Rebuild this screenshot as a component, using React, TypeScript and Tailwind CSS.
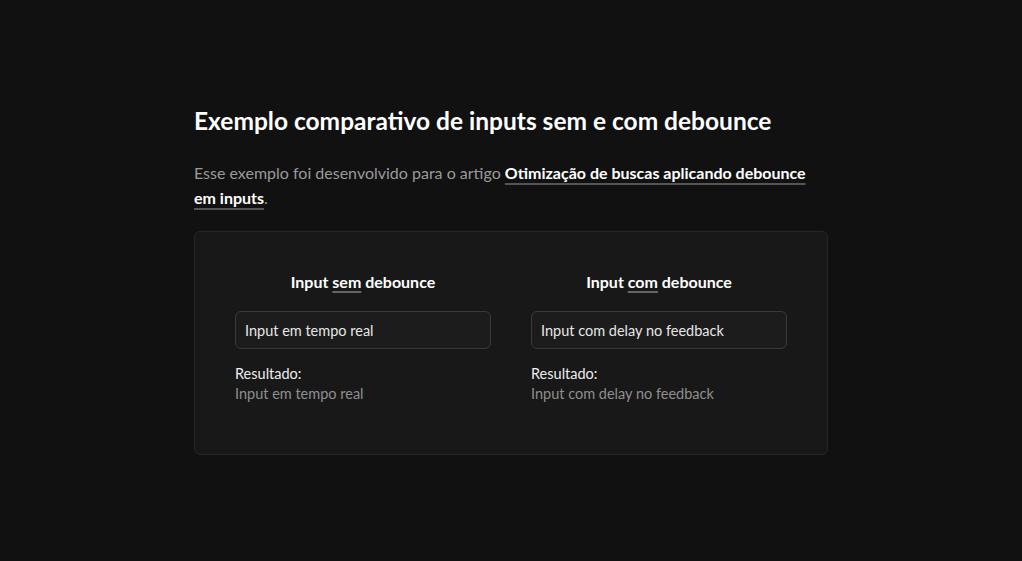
import React, { useEffect, useState } from 'react';

const font = { fontFamily: 'Lato, "Noto Sans", sans-serif' };

const Column: React.FC<{ word: string; initial: string; delay?: number }> = ({ word, initial, delay = 0 }) => {
  const [value, setValue] = useState(initial);
  const [result, setResult] = useState(initial);

  useEffect(() => {
    if (!delay) {
      setResult(value);
      return;
    }
    const t = setTimeout(() => setResult(value), delay);
    return () => clearTimeout(t);
  }, [value, delay]);

  return (
    <div className="flex flex-col">
      <h3 className="text-center text-[16px] font-bold text-white leading-6">
        Input <span className="underline decoration-[#666] decoration-2 underline-offset-[3px]">{word}</span> debounce
      </h3>
      <input
        value={value}
        onChange={(e) => setValue(e.target.value)}
        className="mt-[17px] h-[38px] w-full rounded-md border border-[#3a3a3a] bg-[#1c1c1c] px-[9px] text-[14.5px] text-[#e6e6e6] outline-none"
        style={font}
      />
      <div className="mt-[15px] text-[14.5px] leading-5">
        <p className="text-[#ededed]">Resultado:</p>
        <p className="text-[#8f8f8f]">{result}</p>
      </div>
    </div>
  );
};

export default function App() {
  return (
    <div className="min-h-[561px] w-full bg-[#111111]" style={font}>
      <div className="mx-auto w-[634px] pt-[105px]">
        <h1 className="text-[24.5px] font-bold leading-8 text-white">
          Exemplo comparativo de inputs sem e com debounce
        </h1>
        <p className="mt-[23px] text-[16px] leading-[25px] text-[#9a9a9a]">
          Esse exemplo foi desenvolvido para o artigo{' '}
          <a
            href="#"
            className="font-bold text-white underline decoration-[#555] decoration-2 underline-offset-[4px]"
          >
            Otimização de buscas aplicando debounce em inputs
          </a>
          .
        </p>
        <div className="mt-[21px] grid h-[224px] grid-cols-2 gap-10 rounded-md border border-[#262626] bg-[#181818] px-10 pt-[38px]">
          <Column word="sem" initial="Input em tempo real" />
          <Column word="com" initial="Input com delay no feedback" delay={500} />
        </div>
      </div>
    </div>
  );
}
